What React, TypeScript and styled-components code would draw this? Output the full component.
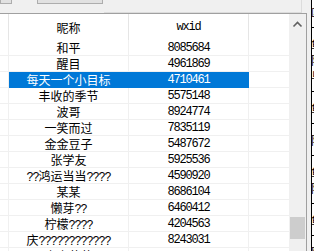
import styled, { createGlobalStyle } from "styled-components";

const GlobalStyle = createGlobalStyle`
  html, body {
    margin: 0;
    padding: 0;
    background: #f0f0f0;
  }
  body {
    font-family: "Noto Sans CJK SC", "Liberation Sans", sans-serif;
    font-size: 12px;
    color: #000;
  }
`;

const Window = styled.div`
  width: 314px;
  height: 251px;
  overflow: hidden;
  display: flex;
  flex-direction: column;
  background: #f0f0f0;
`;

const Toolbar = styled.div`
  height: 13px;
  flex-shrink: 0;
  display: flex;
  align-items: flex-start;
`;

const StubButton = styled.div<{ $width: number; $left: number }>`
  width: ${(p) => p.$width}px;
  margin-left: ${(p) => p.$left}px;
  height: 4px;
  box-sizing: border-box;
  background: #e1e1e1;
  border: 1px solid #adadad;
  border-top: none;
`;

const OptionsPanel = styled.div`
  width: 198px;
  height: 13px;
  margin-left: 1px;
  box-sizing: border-box;
  border-right: 1px solid #dcdcdc;
  border-bottom: 1px solid #dcdcdc;
`;

const Body = styled.div`
  flex: 1;
  min-height: 0;
  display: flex;
`;

const ListView = styled.div`
  width: 307px;
  box-sizing: border-box;
  border-top: 1px solid #a0a0a0;
  border-right: 1px solid #a0a0a0;
  background: #fff;
  display: flex;
  overflow: hidden;
`;

const Table = styled.div`
  width: 289px;
  display: flex;
  flex-direction: column;
`;

const Row = styled.div`
  display: grid;
  grid-template-columns: 9px 120px 120px 40px;
`;

const HeadCell = styled.div<{ $last?: boolean }>`
  height: 26px;
  box-sizing: border-box;
  border-right: ${(p) => (p.$last ? "none" : "1px solid #e5e5e5")};
  display: flex;
  align-items: center;
  justify-content: center;
  white-space: nowrap;
`;

const Cell = styled.div<{ $selected?: boolean; $last?: boolean }>`
  height: 16px;
  box-sizing: border-box;
  border-bottom: 1px solid ${(p) => (p.$selected ? "#0078d7" : "#f0f0f0")};
  border-right: ${(p) =>
    p.$last ? "none" : `1px solid ${p.$selected ? "#0078d7" : "#f0f0f0"}`};
  background: ${(p) => (p.$selected ? "#0078d7" : "#fff")};
  color: ${(p) => (p.$selected ? "#fff" : "#000")};
  display: flex;
  align-items: center;
  justify-content: center;
  line-height: 15px;
  white-space: nowrap;
  overflow: hidden;
`;

const Text = styled.span`
  display: inline-block;
  height: 15px;
  line-height: 15px;
`;

const Half = styled.span`
  font-family: "Liberation Mono", "DejaVu Sans Mono", monospace;
  font-size: 12px;
  line-height: 10px;
  letter-spacing: -1.2px;
`;

const ScrollBar = styled.div`
  width: 17px;
  background: #f0f0f0;
  display: flex;
  flex-direction: column;
`;

const ArrowButton = styled.div`
  height: 17px;
  display: flex;
`;

const Thumb = styled.div`
  margin: 186px 1px 0 1px;
  width: 15px;
  height: 22px;
  background: #cdcdcd;
`;

const Gutter = styled.div`
  width: 4px;
`;

const SidePanel = styled.div`
  flex: 1;
  margin-top: -13px;
  background: #fff;
  border-left: 1px solid #000;
  overflow: hidden;
  font-size: 12px;
  line-height: 16px;
  padding-top: 4px;
`;

const SideLine = styled.div`
  white-space: nowrap;
  margin-left: -1px;
`;

// ascii runs get the half-width mono face, the rest stays cjk
const Label = ({ text }: { text: string }) => (
  <Text>
    {text.split(/([\x00-\x7f]+)/).map((part, i) =>
      /^[\x00-\x7f]+$/.test(part) ? <Half key={i}>{part}</Half> : part
    )}
  </Text>
);

const contacts = [
  { name: "和平", wxid: "8085684" },
  { name: "醒目", wxid: "4961869" },
  { name: "每天一个小目标", wxid: "4710461", selected: true },
  { name: "丰收的季节", wxid: "5575148" },
  { name: "波哥", wxid: "8924774" },
  { name: "一笑而过", wxid: "7835119" },
  { name: "金金豆子", wxid: "5487672" },
  { name: "张学友", wxid: "5925536" },
  { name: "??鸿运当当????", wxid: "4590920" },
  { name: "某某", wxid: "8686104" },
  { name: "懒芽??", wxid: "6460412" },
  { name: "柠檬????", wxid: "4204563" },
  { name: "庆????????????", wxid: "8243031" },
  { name: "小小草莓", wxid: "" },
];

const sideText = ["☑", "一", "鱼", "阿", "鸟", "一", "鱼", "一", "阿", "一", "鱼", "阿", "一", "鱼", "一", "阿"];

export default function App() {
  return (
    <Window>
      <GlobalStyle />
      <Toolbar>
        <StubButton $width={12} $left={0} />
        <StubButton $width={66} $left={25} />
        <OptionsPanel />
      </Toolbar>
      <Body>
        <ListView>
          <Table>
            <Row>
              <HeadCell />
              <HeadCell>昵称</HeadCell>
              <HeadCell>
                <Half>wxid</Half>
              </HeadCell>
              <HeadCell $last />
            </Row>
            {contacts.map((c) => (
              <Row key={c.name}>
                <Cell />
                <Cell $selected={c.selected}>
                  <Label text={c.name} />
                </Cell>
                <Cell $selected={c.selected}>
                  <Half>{c.wxid}</Half>
                </Cell>
                <Cell $last />
              </Row>
            ))}
          </Table>
          <ScrollBar>
            <ArrowButton>
              <svg width="17" height="17" viewBox="0 0 17 17">
                <polyline
                  points="4.5,12.5 8.5,8.5 12.5,12.5"
                  fill="none"
                  stroke="#606060"
                  strokeWidth="1.6"
                />
              </svg>
            </ArrowButton>
            <Thumb />
          </ScrollBar>
        </ListView>
        <Gutter />
        <SidePanel>
          {sideText.map((t, i) => (
            <SideLine key={i}>{t}</SideLine>
          ))}
        </SidePanel>
      </Body>
    </Window>
  );
}
